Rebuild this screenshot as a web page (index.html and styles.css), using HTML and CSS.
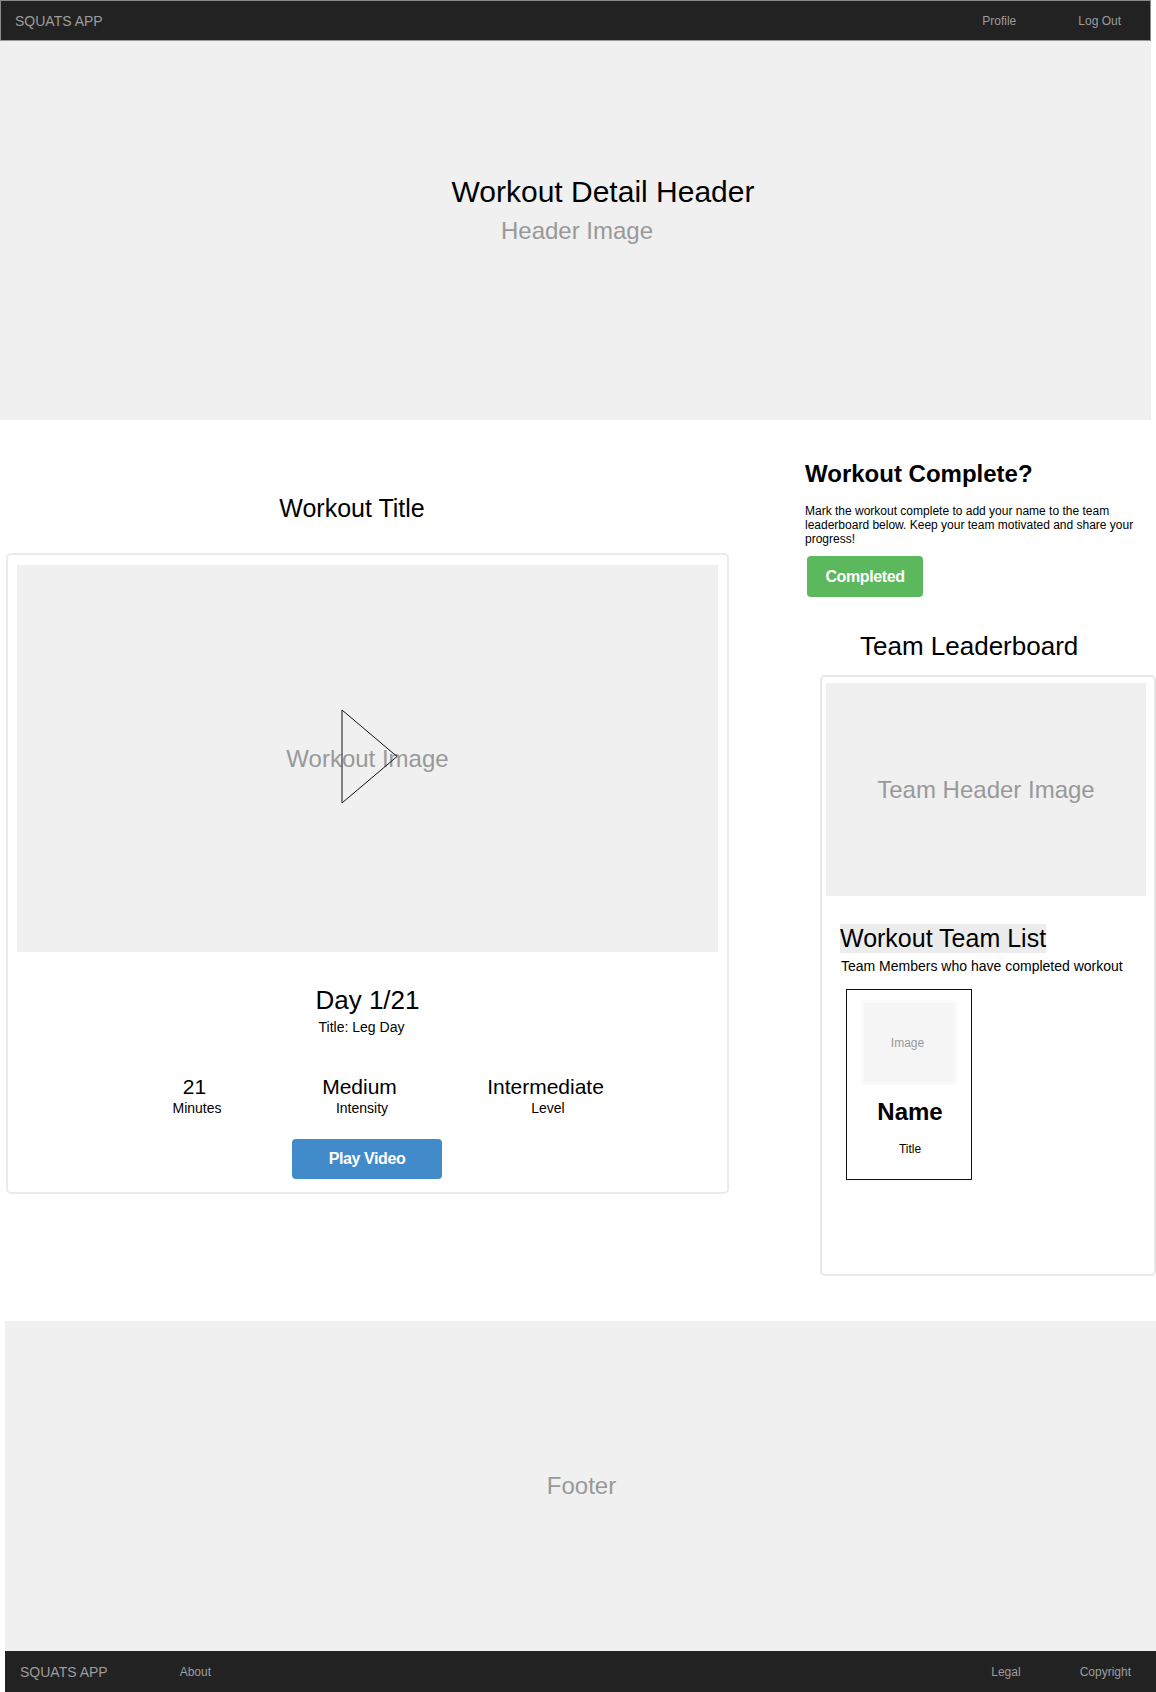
FILE: index.html
```html
<!DOCTYPE html>
<html lang="en">
<head>
    <meta charset="UTF-8">
    <title>Workout Detail</title>
    <link rel="stylesheet" href="styles.css">
</head>
<body>

    <nav class="topnav">
        <span class="brand">SQUATS APP</span>
        <a class="topnav-link profile-link">Profile</a>
        <a class="topnav-link">Log Out</a>
    </nav>

    <header class="hero">
        <h1 class="hero-title">Workout Detail Header</h1>
        <p class="hero-image">Header Image</p>
    </header>

    <main class="content">
        <section class="workout">
            <h2 class="workout-title">Workout Title</h2>
            <div class="workout-card">
                <div class="workout-image">
                    <span class="placeholder">Workout Image</span>
                    <svg class="play-icon" width="58" height="95" viewBox="0 0 58 95">
                        <polygon points="1,1 56,47.5 1,94" fill="none" stroke="#111" stroke-width="1"/>
                    </svg>
                </div>
                <h3 class="day">Day 1/21</h3>
                <p class="day-title">Title: Leg Day</p>
                <div class="stats">
                    <div class="stat stat-minutes">
                        <div class="stat-value">21</div>
                        <div class="stat-label">Minutes</div>
                    </div>
                    <div class="stat stat-intensity">
                        <div class="stat-value">Medium</div>
                        <div class="stat-label">Intensity</div>
                    </div>
                    <div class="stat stat-level">
                        <div class="stat-value">Intermediate</div>
                        <div class="stat-label">Level</div>
                    </div>
                </div>
                <button class="btn btn-play">Play Video</button>
            </div>
        </section>

        <aside class="sidebar">
            <h2 class="complete-title">Workout Complete?</h2>
            <p class="complete-text">Mark the workout complete to add your name to the team leaderboard below. Keep your team motivated and share your progress!</p>
            <button class="btn btn-complete">Completed</button>
            <h2 class="leaderboard-title">Team Leaderboard</h2>
            <div class="team-card">
                <div class="team-image"><span class="placeholder">Team Header Image</span></div>
                <h3 class="team-list-title"><span class="highlight">Workout Team List</span></h3>
                <p class="team-list-text">Team Members who have completed workout</p>
                <div class="member">
                    <div class="member-image">Image</div>
                    <div class="member-name">Name</div>
                    <div class="member-title">Title</div>
                </div>
            </div>
        </aside>
    </main>

    <footer class="footer">
        <div class="footer-block"><span class="placeholder">Footer</span></div>
        <nav class="footer-nav">
            <span class="brand">SQUATS APP</span>
            <a class="topnav-link about-link">About</a>
            <a class="topnav-link legal-link">Legal</a>
            <a class="topnav-link">Copyright</a>
        </nav>
    </footer>

</body>
</html>
```

FILE: styles.css
```css
* {
    box-sizing: border-box;
}
html, body {
    overflow-x: hidden;
}
body {
    margin: 0;
    width: 1156px;
    font-family: "Liberation Sans", Arial, sans-serif;
    color: #000;
    background-color: #fff;
}
h1, h2, h3, p {
    margin: 0;
    font-weight: normal;
}
.topnav {
    width: 1151px;
    height: 41px;
    display: flex;
    align-items: center;
    padding: 0 29px 0 14px;
    background-color: #222;
    border: 1px solid #8a8a8a;
    border-bottom-color: #999;
}
.brand {
    font-size: 14px;
    color: #9d9d9d;
}
.topnav-link {
    font-size: 12px;
    color: #9d9d9d;
}
.profile-link {
    margin-left: auto;
    margin-right: 62px;
}
.hero {
    width: 1151px;
    height: 379px;
    padding-top: 134px;
    background-color: #f0f0f0;
    text-align: center;
}
.hero-title {
    font-size: 30px;
    line-height: 34px;
    padding-left: 55px;
}
.hero-image {
    margin-top: 5px;
    padding-left: 3px;
    font-size: 24px;
    line-height: 34px;
    color: #999;
}
.placeholder {
    font-size: 24px;
    color: #999;
}
.content {
    display: flex;
    height: 901px;
}
.workout {
    width: 729px;
    padding: 71px 0 0 6px;
    flex: none;
}
.workout-title {
    font-size: 25px;
    line-height: 34px;
    margin-bottom: 28px;
    width: 692px;
    text-align: center;
}
.workout-card {
    width: 723px;
    height: 641px;
    padding: 10px 9px;
    border: 2px solid #ebebeb;
    border-radius: 5px;
    text-align: center;
}
.workout-image {
    position: relative;
    height: 387px;
    display: flex;
    align-items: center;
    justify-content: center;
    background-color: #f0f0f0;
}
.play-icon {
    position: absolute;
    left: 324px;
    top: 144px;
}
.day {
    margin-top: 33px;
    font-size: 26px;
    line-height: 30px;
}
.day-title {
    margin-top: 2px;
    padding-right: 12px;
    font-size: 14px;
    line-height: 20px;
}
.stats {
    display: flex;
    margin-top: 37px;
}
.stat {
    width: 186px;
}
.stat-minutes {
    margin-left: 87px;
}
.stat-intensity {
    margin-left: -22px;
    width: 188px;
}
.stat-level {
    margin-left: -1px;
}
.stat-value {
    font-size: 21px;
    line-height: 26px;
    padding-right: 5px;
}
.stat-label {
    font-size: 14px;
    line-height: 16px;
}
.btn {
    display: block;
    border: none;
    border-radius: 4px;
    color: #fff;
    font-family: inherit;
    font-size: 16px;
    font-weight: bold;
    letter-spacing: -0.4px;
}
.btn-play {
    width: 150px;
    height: 40px;
    margin: 23px 0 0 275px;
    background-color: #428bca;
}
.sidebar {
    flex: 1;
    min-width: 0;
    padding: 39px 0 0 76px;
}
.complete-title {
    font-size: 24px;
    font-weight: bold;
    line-height: 30px;
}
.complete-text {
    margin-top: 15px;
    width: 342px;
    font-size: 12px;
    line-height: 14px;
}
.btn-complete {
    width: 116px;
    height: 41px;
    margin: 10px 0 0 2px;
    background-color: #5cb85c;
}
.leaderboard-title {
    margin-top: 32px;
    padding-left: 55px;
    font-size: 26px;
    line-height: 34px;
}
.team-card {
    width: 336px;
    height: 601px;
    margin: 12px 0 0 15px;
    padding: 6px 8px 0 4px;
    border: 2px solid #e8e8e8;
    border-radius: 5px;
}
.team-image {
    height: 213px;
    display: flex;
    align-items: center;
    justify-content: center;
    background-color: #f0f0f0;
}
.team-list-title {
    margin: 28px 0 0 14px;
    font-size: 25px;
    line-height: 29px;
}
.highlight {
    display: inline-block;
    background-color: #ececec;
}
.team-list-text {
    margin: 3px 0 0 15px;
    font-size: 14px;
    line-height: 20px;
}
.member {
    width: 126px;
    height: 191px;
    margin: 13px 0 0 20px;
    padding: 10px 14px 0;
    border: 1px solid #111;
    text-align: center;
}
.member-image {
    width: 96px;
    height: 85px;
    display: flex;
    align-items: center;
    justify-content: center;
    padding-right: 3px;
    font-size: 12px;
    color: #999;
    background-color: #f5f5f5;
    border: 3px solid #fafafa;
    border-radius: 4px;
}
.member-name {
    margin-top: 13px;
    font-size: 24px;
    font-weight: bold;
    line-height: 28px;
    padding-left: 2px;
}
.member-title {
    margin-top: 15px;
    font-size: 12px;
    line-height: 16px;
    padding-left: 2px;
}
.footer {
    margin-left: 5px;
}
.footer-block {
    height: 330px;
    display: flex;
    align-items: center;
    justify-content: center;
    background-color: #f0f0f0;
}
.footer-block .placeholder {
    margin-left: 2px;
}
.footer-nav {
    height: 41px;
    display: flex;
    align-items: center;
    padding: 0 25px 0 15px;
    background-color: #222;
}
.about-link {
    margin-left: 72px;
}
.legal-link {
    margin-left: auto;
    margin-right: 59px;
}
```
